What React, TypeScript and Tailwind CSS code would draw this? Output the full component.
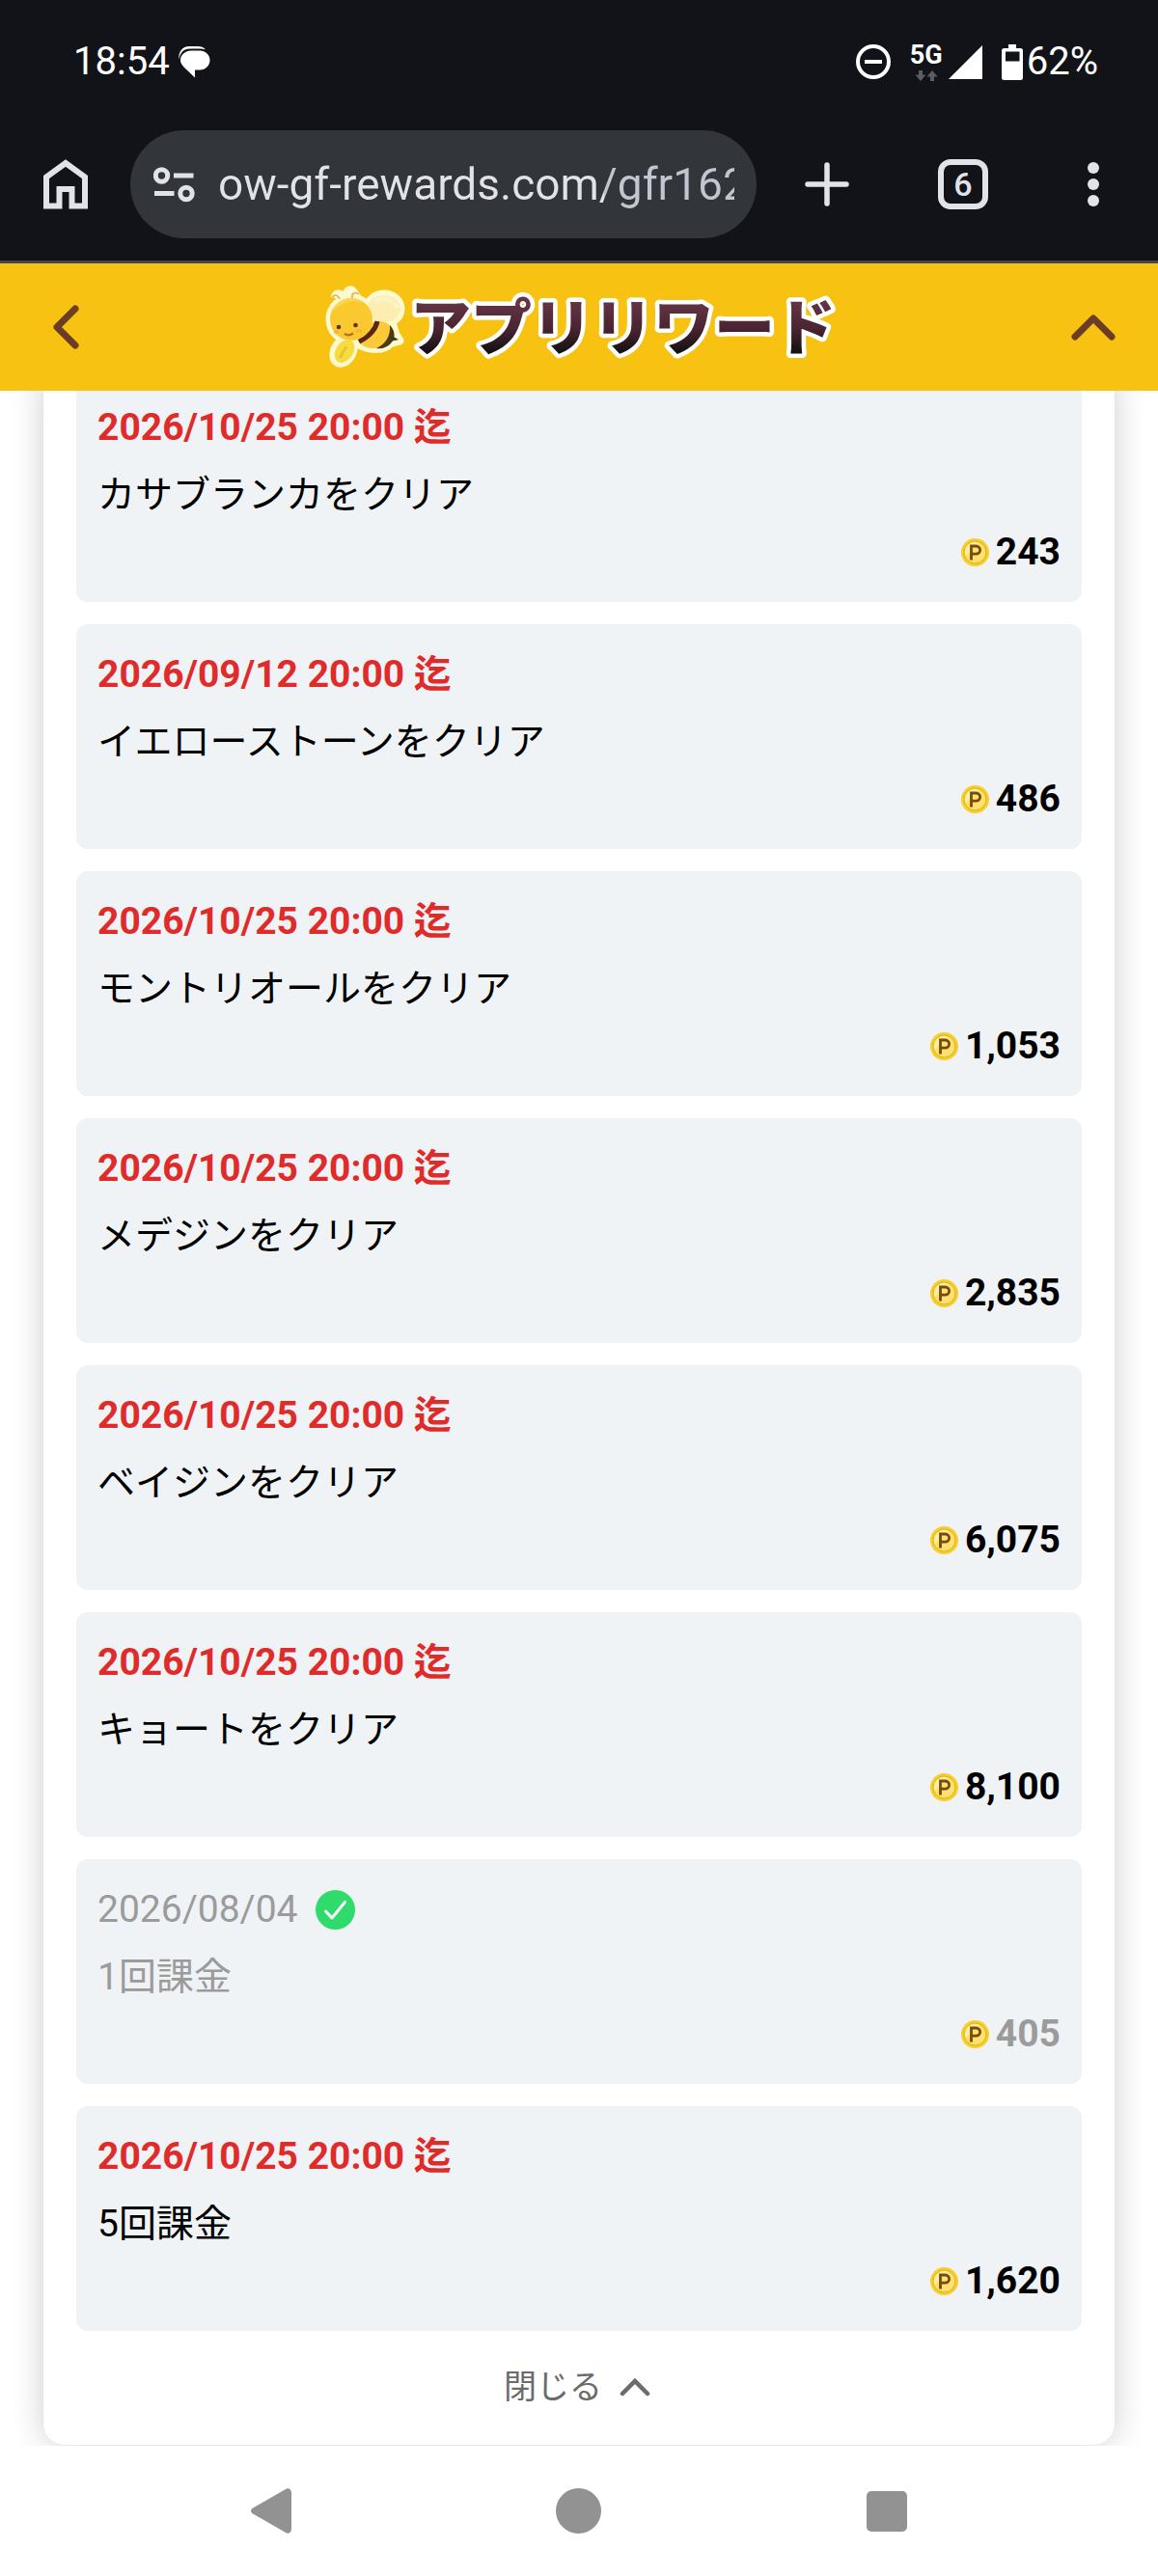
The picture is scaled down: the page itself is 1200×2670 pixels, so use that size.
import React, { useState } from 'react';

type Reward = {
  date: string;
  title: string;
  points: string;
  done?: boolean;
};

const rewards: Reward[] = [
  { date: '2026/10/25 20:00 迄', title: 'カサブランカをクリア', points: '243' },
  { date: '2026/09/12 20:00 迄', title: 'イエローストーンをクリア', points: '486' },
  { date: '2026/10/25 20:00 迄', title: 'モントリオールをクリア', points: '1,053' },
  { date: '2026/10/25 20:00 迄', title: 'メデジンをクリア', points: '2,835' },
  { date: '2026/10/25 20:00 迄', title: 'ベイジンをクリア', points: '6,075' },
  { date: '2026/10/25 20:00 迄', title: 'キョートをクリア', points: '8,100' },
  { date: '2026/08/04', title: '1回課金', points: '405', done: true },
  { date: '2026/10/25 20:00 迄', title: '5回課金', points: '1,620' },
];

const StatusBar: React.FC = () => (
  <div className="flex h-[126px] items-center justify-between pl-[76px] pr-[62px] pt-[2px] text-[40px] leading-none text-white">
    <div className="flex items-center gap-2">
      <span>18:54</span>
      <svg width="34" height="34" viewBox="0 0 34 34" fill="#fff" aria-hidden="true">
        <path d="M14 5.5h9C29 5.500 33.500 10 33.500 15.300 33.500 21 29 25.500 23 25.500H18V33.500L7 23C4 20 3 18 3 15.300 3 10 8 5.500 14 5.500Z" />
        <path d="M1.500 14.500C.500 7 5 1 12 1h9c3.500 0 6 1 7.800 3.300-2-.7-3.800-.8-6.300-.8H13C6 3.500 2.500 8 1.500 14.500Z" />
      </svg>
    </div>
    <div className="flex items-center">
      <svg className="mr-5" width="36" height="36" viewBox="0 0 36 36" fill="none" stroke="#fff" strokeWidth="4" aria-hidden="true">
        <circle cx="18" cy="18" r="16" />
        <path d="M9 18h18" />
      </svg>
      <div className="mr-[6px] flex flex-col items-center gap-1">
        <span className="text-[27px] font-bold leading-6">5G</span>
        <svg width="24" height="11" viewBox="0 0 24 11" fill="#5c5d61" aria-hidden="true">
          <path d="M4 0h4v4.500h3.500L6 11 .500 4.500H4ZM16 11h4V6.500h3.500L18 0l-5.500 6.500H16Z" />
        </svg>
      </div>
      <svg className="mr-5" width="35" height="35" viewBox="0 0 35 35" fill="#fff" aria-hidden="true">
        <path d="M35 0v35H0Z" />
      </svg>
      <svg className="mr-1" width="22" height="37" viewBox="0 0 22 37" fill="#fff" aria-hidden="true">
        <path
          fillRule="evenodd"
          d="M7 0h8v4h4.500A2.500 2.500 0 0 1 22 6.500v28a2.500 2.500 0 0 1-2.500 2.500h-17A2.500 2.500 0 0 1 0 34.500v-28A2.500 2.500 0 0 1 2.500 4H7ZM4 7.500v10h14.500v-10Z"
        />
      </svg>
      <span>62%</span>
    </div>
  </div>
);

const BrowserBar: React.FC = () => {
  const [url, setUrl] = useState('ow-gf-rewards.com/gfr162');

  return (
    <div className="flex items-center border-b-[3px] border-[#45464d] pb-[23px] pt-[9px] text-[#e2e2e9]">
      <button className="flex w-[135px] shrink-0 justify-center" aria-label="ホーム">
        <svg width="46" height="52" viewBox="0 0 46 52" fill="none" stroke="currentColor" strokeWidth="6">
          <path d="M3 48.500V18.500L23 4l20 14.500v30H29.500V31h-13v17.500Z" />
        </svg>
      </button>
      <div className="flex h-28 min-w-0 flex-1 items-center rounded-full bg-[#323539] pl-6 pr-[23px]">
        <svg className="mr-6 shrink-0" width="43" height="37" viewBox="0 0 43 37" fill="none" stroke="currentColor" strokeWidth="5" aria-hidden="true">
          <circle cx="8.500" cy="9" r="6.200" />
          <circle cx="34" cy="27.500" r="6.200" />
          <path d="M21 9h20.500M1 27.500h20.500" />
        </svg>
        {/* the domain is drawn lighter than the path */}
        <input
          type="text"
          aria-label="アドレス"
          value={url}
          onChange={(e) => setUrl(e.target.value)}
          className="min-w-0 flex-1 bg-[linear-gradient(90deg,#e2e2e9_400px,#c3c6d0_400px)] bg-clip-text text-[46px] leading-[64px] text-transparent outline-none"
        />
      </div>
      <button className="flex w-[146px] shrink-0 justify-center" aria-label="新しいタブ">
        <svg width="46" height="46" viewBox="0 0 46 46" stroke="currentColor" strokeWidth="5.500" strokeLinecap="round">
          <path d="M23 3v40M3 23h40" />
        </svg>
      </button>
      <button className="flex w-[136px] shrink-0 justify-center" aria-label="タブ一覧">
        <span className="flex h-[52px] w-[52px] items-center justify-center rounded-[13px] border-[6px] border-current text-[34px] font-medium leading-none">
          6
        </span>
      </button>
      <button className="flex w-[134px] shrink-0 justify-center" aria-label="メニュー">
        <svg width="12" height="46" viewBox="0 0 12 46" fill="currentColor">
          <circle cx="6" cy="6" r="6" />
          <circle cx="6" cy="23" r="6" />
          <circle cx="6" cy="40" r="6" />
        </svg>
      </button>
    </div>
  );
};

const Bee: React.FC = () => (
  <svg className="shrink-0" width="84" height="88" viewBox="0 0 84 88" aria-hidden="true">
    {/* pale sticker outline */}
    <g fill="#fff9cf" stroke="#fff9cf" strokeWidth="9" strokeLinejoin="round">
      <circle cx="28" cy="36" r="22" />
      <path d="M11 14c1-5 5-5 7-2l5-1c1-6 6-7 8-2l4 6" />
      <ellipse cx="62" cy="25" rx="17" ry="15" />
      <path d="M34 54 51 39l19 0 4 13 4 6-10 3C62 68 48 68 36 62Z" />
      <ellipse cx="20" cy="69" rx="9" ry="13" transform="rotate(30 20 69)" />
    </g>
    <ellipse cx="62" cy="25" rx="17" ry="14" fill="#fbeeb0" />
    <path d="M52 18c7-6 20-3 24 6" fill="none" stroke="#fdf4cc" strokeWidth="4" />
    <path d="M34 56C40 46 48 38 56 38c9 0 16 5 16 12 0 8-12 17-22 16-7 0-14-4-16-10Z" fill="#fbc93a" />
    <path d="M36 59C46 54 53 48 55 38" fill="none" stroke="#5b2414" strokeWidth="5" />
    <path d="M54 66c9-4 15-12 14-24 6 7 6 13 1 19-4 4-9 6-15 5Z" fill="#4b3a16" />
    <path d="m70 53 7 4-9 2Z" fill="#3f3820" />
    <circle cx="28" cy="36" r="22" fill="#fac92f" />
    <path d="M9 28C13 14 31 9 43 20 31 14 19 17 9 28Z" fill="#fbd653" />
    <path d="M16 15c-2-5-6-5-8-1M29 14c-1-5 3-7 7-4" fill="none" stroke="#dcc06a" strokeWidth="2" />
    <circle cx="15" cy="44" r="2.300" fill="#593218" />
    <circle cx="32.500" cy="42" r="2.300" fill="#593218" />
    <path d="M21 51c3 2 6 1.500 9-.5" fill="none" stroke="#b0701f" strokeWidth="2.200" />
    <path d="M10 49h5M33 48h6" stroke="#f8b238" strokeWidth="3" />
    <ellipse cx="21" cy="69" rx="9" ry="13" transform="rotate(34 21 69)" fill="#f6dc40" />
    <path d="m16 76 7-12" stroke="#e6c62f" strokeWidth="3" />
  </svg>
);

const LogoText: React.FC = () => (
  <svg className="shrink-0" width="452" height="100" viewBox="0 0 452 100" role="img" aria-label="アプリリワード">
    <defs>
      <linearGradient id="logoFill" gradientUnits="userSpaceOnUse" x1="0" y1="22" x2="0" y2="76">
        <stop offset="0" stopColor="#653647" />
        <stop offset="0.55" stopColor="#4a2430" />
        <stop offset="1" stopColor="#141214" />
      </linearGradient>
    </defs>
    <g fontFamily="'Noto Sans CJK JP', sans-serif" fontSize="63" fontWeight="900" strokeLinejoin="round">
      <text x="5" y="73" fill="url(#logoFill)" stroke="#fff" strokeWidth="9" paintOrder="stroke">アプリリワード</text>
    </g>
  </svg>
);

const Coin: React.FC = () => (
  <svg width="29" height="29" viewBox="0 0 29 29" aria-hidden="true">
    <circle cx="14.500" cy="14.500" r="14.500" fill="#f6cf27" />
    <circle cx="14.500" cy="14.500" r="11.500" fill="#ffe16b" stroke="#dcaa22" strokeWidth="1" />
    <path d="M4.500 18A10.500 10.500 0 0 1 18 4.600Z" fill="#fff3a0" />
    <path d="M10.500 22.500V8h5a3.800 3.800 0 0 1 0 8.200h-5" fill="none" stroke="#764a12" strokeWidth="2.800" />
  </svg>
);

const RewardItem: React.FC<{ reward: Reward }> = ({ reward }) => {
  const { date, title, points, done } = reward;

  return (
    <li className={`rounded-xl bg-[#eff3f6] px-[22px] pb-[22px] pt-[23px] text-[39px] leading-[59px] ${done ? 'text-[#9b9b9b]' : 'text-black'}`}>
      <div className="flex items-center gap-[18px]">
        <span className={done ? '' : 'font-bold text-[#e02b2b]'}>{date}</span>
        {done && (
          <svg width="41" height="41" viewBox="0 0 41 41" role="img" aria-label="達成済み">
            <circle cx="20.500" cy="20.500" r="20.500" fill="#2edb6b" />
            <path d="m10.500 22 6.500 7L30.500 12.500" fill="none" stroke="#fff" strokeWidth="3" strokeLinecap="round" strokeLinejoin="round" />
          </svg>
        )}
      </div>
      <p className="mt-[11px]">{title}</p>
      <div className="flex items-center justify-end gap-[7px] font-bold">
        <Coin />
        <span>{points}</span>
      </div>
    </li>
  );
};

const App: React.FC = () => {
  const [open, setOpen] = useState(true);

  return (
    <div className="w-full bg-white font-[Roboto,'Noto_Sans_CJK_JP',sans-serif]">
      <div className="bg-[#121318]">
        <StatusBar />
        <BrowserBar />
      </div>

      <header className="relative z-10 flex h-[132px] items-center justify-between bg-[#f8c213] pl-[54px] pr-[44px] text-[#6b3d24]">
        <button aria-label="戻る">
          <svg width="28" height="46" viewBox="0 0 28 46" fill="none" stroke="currentColor" strokeWidth="7" strokeLinecap="round" strokeLinejoin="round">
            <path d="M24 4 5 23l19 19" />
          </svg>
        </button>
        <h1 className="flex items-center pl-4">
          <Bee />
          <LogoText />
        </h1>
        <button aria-label="ページの先頭へ">
          <svg width="46" height="28" viewBox="0 0 46 28" fill="none" stroke="currentColor" strokeWidth="7" strokeLinecap="round" strokeLinejoin="round">
            <path d="M4 24 23 5l19 19" />
          </svg>
        </button>
      </header>

      <main className="overflow-hidden px-[45px] pb-px">
        {/* the list is scrolled slightly under the header */}
        <section className="-mt-[14px] rounded-b-[22px] bg-white px-[34px] shadow-[0_0_34px_rgba(0,0,0,0.2)]">
          {open && (
            <ul className="flex flex-col gap-[23px]">
              {rewards.map((reward, i) => (
                <RewardItem key={i} reward={reward} />
              ))}
            </ul>
          )}
          <button
            onClick={() => setOpen(!open)}
            className="flex h-[118px] w-full items-center justify-center gap-[18px] pb-[2px] pr-1 text-[34px] text-[#6b6b6b]"
          >
            {open ? '閉じる' : '開く'}
            <svg className={open ? '' : 'rotate-180'} width="32" height="20" viewBox="0 0 32 20" fill="none" stroke="currentColor" strokeWidth="4.500" strokeLinecap="round" aria-hidden="true">
              <path d="M3 17 16 4l13 13" />
            </svg>
          </button>
        </section>
      </main>

      <nav className="relative grid h-[135px] grid-cols-3 items-center bg-white px-[121px] text-[#929292]">
        <button className="flex justify-center" aria-label="戻る">
          <svg width="42" height="47" viewBox="0 0 42 47" fill="currentColor">
            <path d="M36 1C39 -1 42 1 42 5v37c0 4-3 6-6 4L3 27c-4-2-4-5 0-7Z" />
          </svg>
        </button>
        <button className="flex justify-center" aria-label="ホーム">
          <svg width="47" height="47" viewBox="0 0 47 47" fill="currentColor">
            <circle cx="23.500" cy="23.500" r="23.500" />
          </svg>
        </button>
        <button className="flex justify-center" aria-label="最近使ったアプリ">
          <svg width="42" height="42" viewBox="0 0 42 42" fill="currentColor">
            <rect width="42" height="42" rx="5" />
          </svg>
        </button>
      </nav>
    </div>
  );
};

export default App;
